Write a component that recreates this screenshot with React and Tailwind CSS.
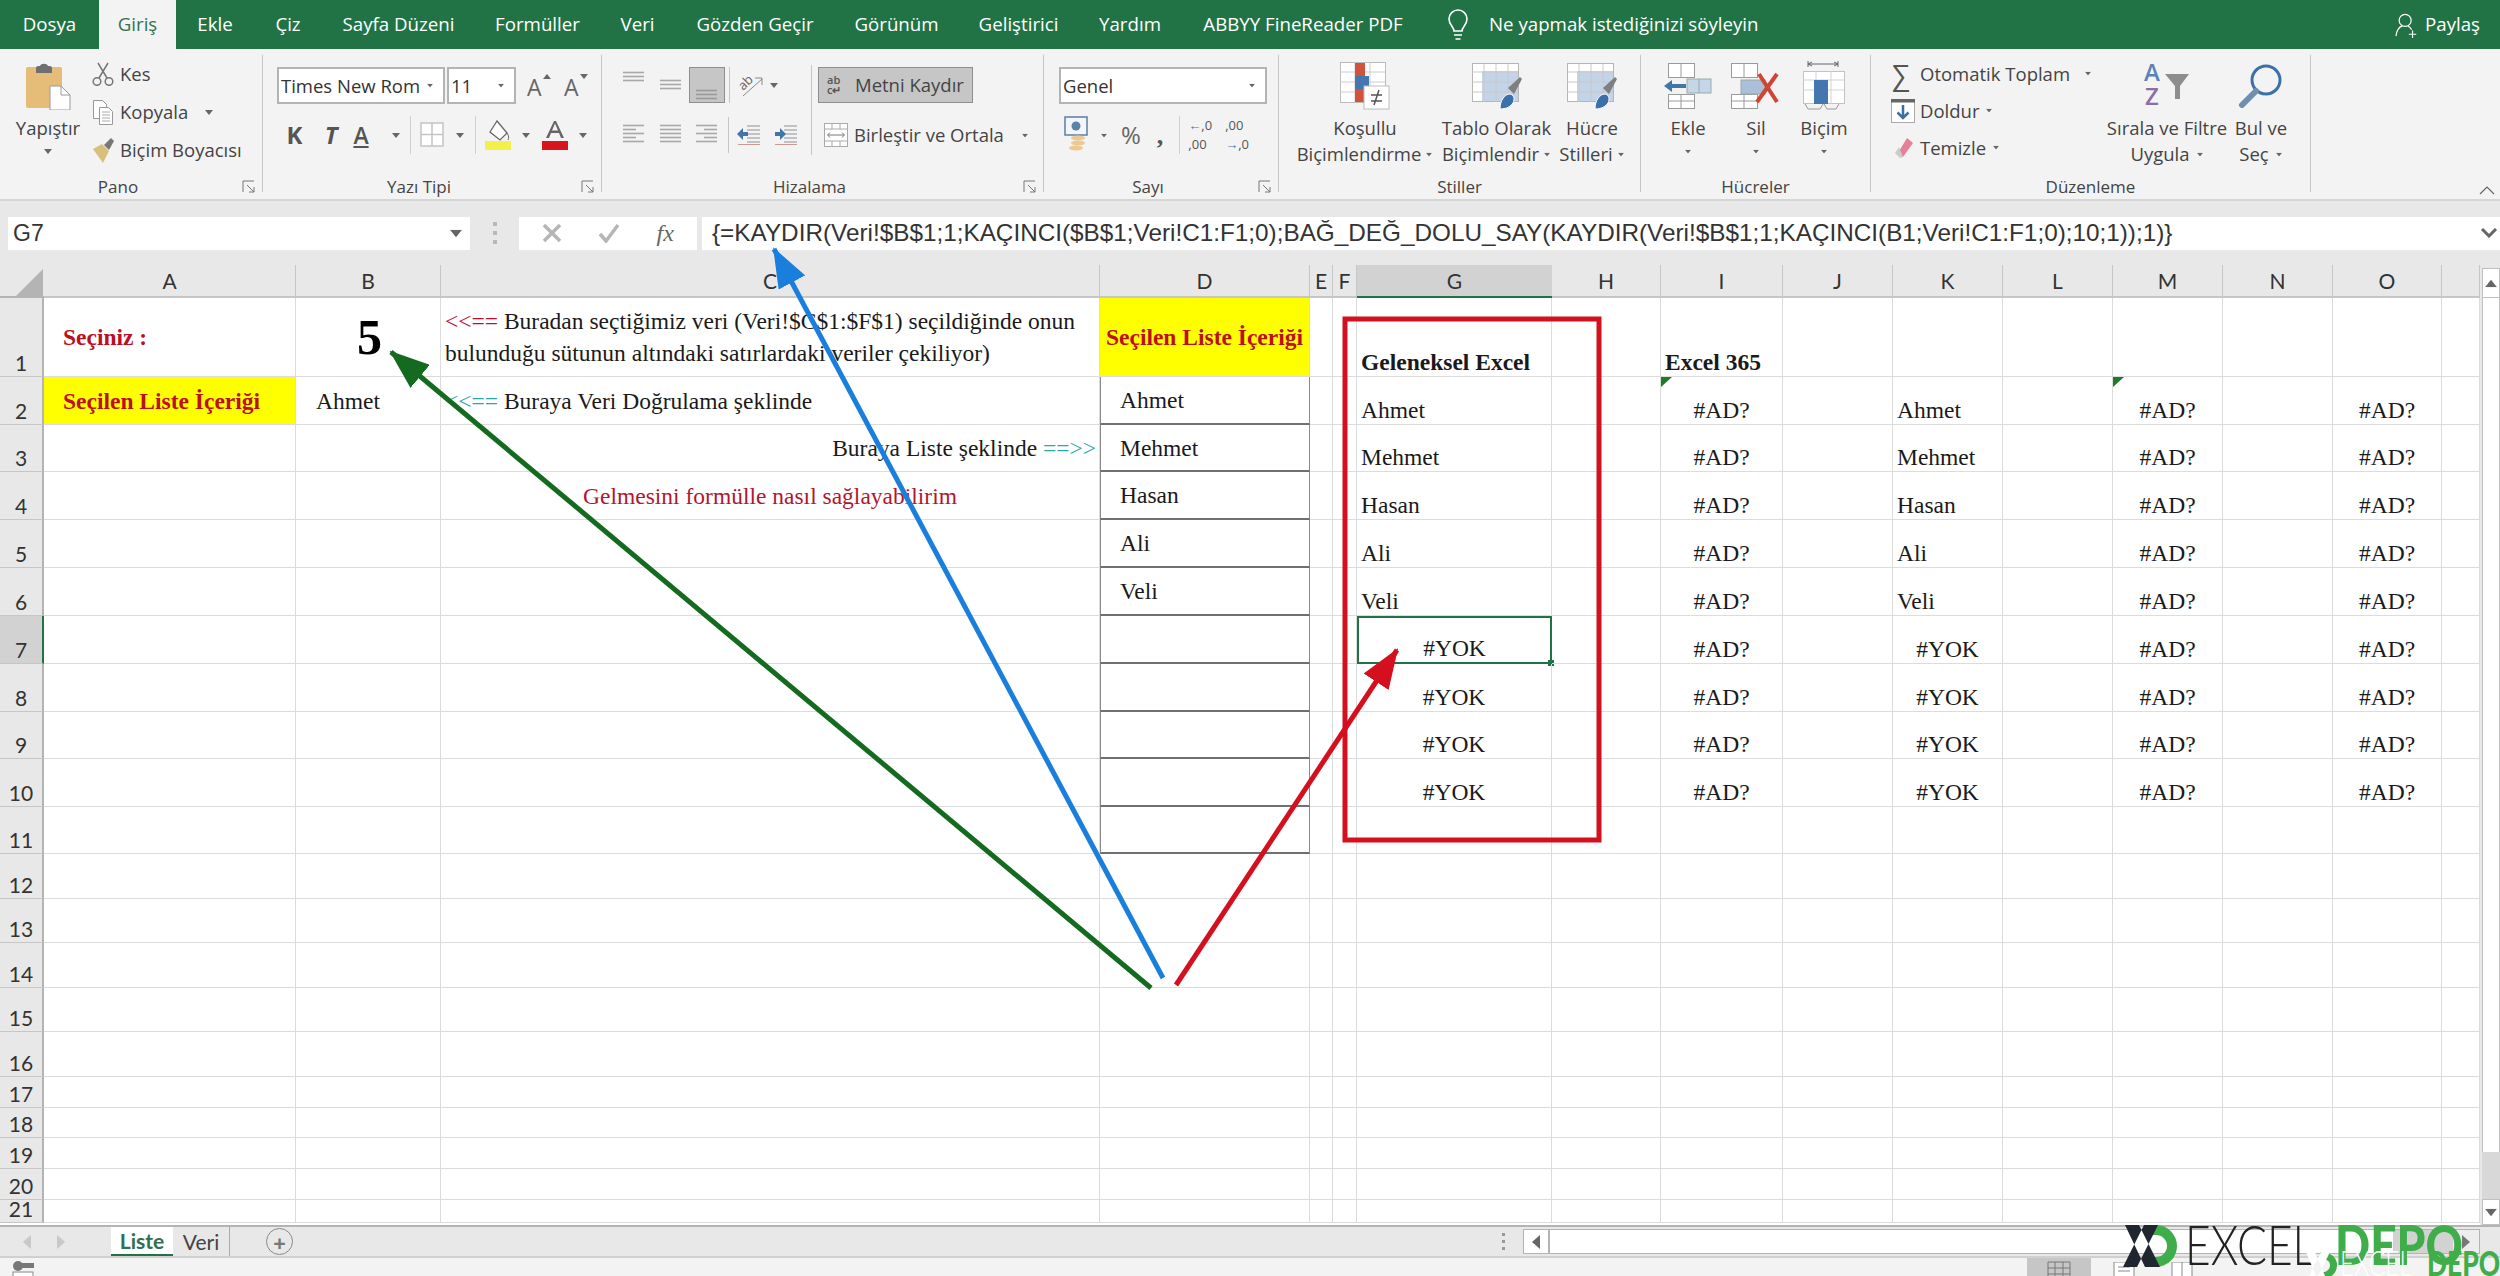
import React from 'react';

const UI = "font-['Open_Sans',sans-serif]";

const tabs = [
  ['Dosya', 'w-[99px]'],
  ['Giriş', 'w-[77px] bg-[#f3f3f3] text-[#35704f]'],
  ['Ekle', 'w-[78px]'],
  ['Çiz', 'w-[68px]'],
  ['Sayfa Düzeni', 'w-[153px]'],
  ['Formüller', 'w-[125px]'],
  ['Veri', 'w-[75px]'],
  ['Gözden Geçir', 'w-[160px]'],
  ['Görünüm', 'w-[123px]'],
  ['Geliştirici', 'w-[121px]'],
  ['Yardım', 'w-[102px]'],
  ['ABBYY FineReader PDF', 'w-[244px]'],
];

const Caret = ({ className = '' }) => (
  <svg width="8" height="5" viewBox="0 0 8 5" className={`shrink-0 ${className}`}>
    <path d="M0 0h8L4 5z" fill="#666" />
  </svg>
);

const Launcher = () => (
  <svg width="14" height="14" viewBox="0 0 14 14" fill="none" stroke="#777" strokeWidth="1">
    <path d="M1 12V1h11" />
    <path d="M5 5l7 7M12 7v5H7" />
  </svg>
);

const Group = ({ width, title, launcher, children }) => (
  <div className={`${width} mt-[6px] flex h-[137px] shrink-0 flex-col border-r border-[#c6c6c6]`}>
    <div className="h-[118px]">{children}</div>
    <div className="flex h-[19px] items-center pt-[8px] text-[17px] text-[#444]">
      <div className="flex-1 text-center leading-none">{title}</div>
      {launcher && (
        <div className="flex w-[26px] justify-center">
          <Launcher />
        </div>
      )}
    </div>
  </div>
);

const Combo = ({ width, text }) => (
  <div className={`${width} flex h-[37px] items-center border-2 border-[#b4b4b4] bg-white pl-[2px] text-[18.500px] text-[#333]`}>
    <span className="flex-1 whitespace-nowrap">{text}</span>
    <Caret className="mr-[9px] scale-75" />
  </div>
);

const Lines = ({ w = 22, h = 36, rows, color = '#a8a8a8' }) => (
  <svg width={w} height={h} viewBox={`0 0 ${w} ${h}`} stroke={color} strokeWidth="1.6">
    {rows.map(([y, x1, x2]) => (
      <path key={y} d={`M${x1} ${y + 0.5}H${x2}`} />
    ))}
  </svg>
);

const PasteIcon = () => (
  <svg width="46" height="48" viewBox="0 0 46 48">
    <rect x="1" y="5" width="36" height="41" rx="2" fill="#e6bd78" />
    <path d="M11 6c0-2 2-2 4-2 1-3 7-3 8 0 2 0 4 0 4 2v5H11z" fill="#6f6f6f" />
    <path d="M25 24h11l9 9v15H25z" fill="#fff" stroke="#9a9a9a" />
    <path d="M36 24v9h9" fill="none" stroke="#9a9a9a" />
  </svg>
);

const ScissorsIcon = () => (
  <svg width="22" height="24" viewBox="0 0 22 24" fill="none" stroke="#777" strokeWidth="1.5">
    <path d="M6 1l9 15M16 1L7 16" />
    <circle cx="5" cy="19.5" r="3.8" />
    <circle cx="17" cy="19.5" r="3.8" />
  </svg>
);

const CopyIcon = () => (
  <svg width="22" height="26" viewBox="0 0 22 26" fill="#fff" stroke="#999">
    <path d="M1.5 1.5h9l4 4v14h-13z" />
    <path d="M7.5 8.5h9l4 4v13h-13z" />
    <path d="M10 13h8M10 16h8M10 19h8M10 22h8" stroke="#aaa" />
  </svg>
);

const BrushIcon = () => (
  <svg width="24" height="28" viewBox="0 0 24 28">
    <path d="M1 13l9-5 7 7-6 12z" fill="#d9c07a" />
    <path d="M12 9l7-7 3 3-5 9z" fill="#777" />
  </svg>
);

const GrowIcon = ({ down }) => (
  <div className="flex w-[37px] items-start">
    <span className="mt-[4px] text-[23px] leading-none text-[#666]">A</span>
    <Caret className={down ? 'ml-[1px] mt-[2px]' : 'ml-[1px] mt-[2px] rotate-180'} />
  </div>
);

const BordersIcon = () => (
  <svg width="24" height="36" viewBox="0 0 24 36" fill="#fff" stroke="#c4c4c4" strokeWidth="1.5">
    <rect x="1" y="6" width="22" height="23" />
    <path d="M12 6v23M1 17.5h22" />
  </svg>
);

const FillIcon = () => (
  <svg width="26" height="30" viewBox="0 0 26 30">
    <path d="M12 1l10 12-7 7-10-8z" fill="#fff" stroke="#666" strokeWidth="1.3" />
    <path d="M22 13c2 3 2 5 1 7" stroke="#666" fill="none" />
    <rect x="0" y="21" width="26" height="9" fill="#f3f04a" />
  </svg>
);

const FontColorIcon = () => (
  <svg width="26" height="30" viewBox="0 0 26 30">
    <path d="M4 18L12 1h2l8 17h-3l-2-5H9l-2 5zM10 10.500h6l-3-7z" fill="#666" fillRule="evenodd" />
    <rect x="0" y="21" width="26" height="9" fill="#d8141f" />
  </svg>
);

const Orientation = () => (
  <svg width="26" height="26" viewBox="0 0 26 26" fill="none" stroke="#888" strokeWidth="1" className="overflow-visible">
    <text x="1" y="15" transform="rotate(-45 8 12)" fontSize="13" fill="#666" stroke="none" fontFamily="Open Sans">ab</text>
    <path d="M5 24L24 7M17 6h7v7" />
  </svg>
);

const IndentIcon = ({ flip }) => (
  <svg width="24" height="22" viewBox="0 0 24 22">
    <path d="M10 2h13M10 6h13M10 10h13M10 14h13M10 18h13" stroke="#b2b2b2" strokeWidth="1.5" />
    {flip ? (
      <path d="M1 8h5V4l6 6-6 6v-4H1z" fill="#3f78a8" />
    ) : (
      <path d="M11 8H6V4l-6 6 6 6v-4h5z" fill="#3f78a8" />
    )}
    <path d="M1 20.500h22" stroke="#c99" strokeWidth="1" />
  </svg>
);

const MergeIcon = () => (
  <svg width="24" height="24" viewBox="0 0 24 24" fill="#fff" stroke="#aaa">
    <rect x="0.500" y="0.500" width="23" height="23" />
    <path d="M0 6h24M0 18h24M8 0v6M16 0v6M8 18v6M16 18v6" />
    <path d="M4 12h16M6 9.500L3.500 12 6 14.500M18 9.500l2.500 2.500-2.500 2.500" stroke="#777" fill="none" />
  </svg>
);

const CurrencyIcon = () => (
  <svg width="24" height="38" viewBox="0 0 24 38">
    <rect x="1" y="1" width="22" height="18" fill="#f2f5f9" stroke="#5b7fa3" strokeWidth="1.500" />
    <circle cx="12" cy="10" r="4.500" fill="#5b82a8" />
    <ellipse cx="14" cy="22" rx="7" ry="2.500" fill="#ecc98e" />
    <ellipse cx="14" cy="27" rx="7" ry="2.500" fill="#ecc98e" />
    <ellipse cx="12" cy="32" rx="7" ry="2.500" fill="#ecc98e" />
  </svg>
);

const CondIcon = () => (
  <svg width="50" height="48" viewBox="0 0 50 48">
    <rect x="0.500" y="0.500" width="45" height="40" fill="#fff" stroke="#bbb" />
    <path d="M15 0v40M30 0v40M0 10h45M0 20h45M0 30h45" stroke="#ccc" />
    <rect x="15" y="1" width="10" height="13" fill="#d1533c" />
    <rect x="15" y="14" width="14" height="13" fill="#4477b0" />
    <rect x="15" y="27" width="10" height="13" fill="#d1533c" />
    <rect x="24" y="24" width="25" height="23" fill="#fff" stroke="#bbb" />
    <path d="M31 33h11M31 39h11M39 28l-5 15" stroke="#555" strokeWidth="1.5" />
  </svg>
);

const TableIcon = () => (
  <svg width="50" height="48" viewBox="0 0 50 48">
    <rect x="0.500" y="1.500" width="46" height="38" fill="#fff" stroke="#b5b5b5" />
    <rect x="10" y="9" width="36" height="30" fill="#c3d3e8" />
    <path d="M12 2v38M24 2v38M36 2v38M0 10h46M0 20h46M0 30h46" stroke="#c8c8c8" />
    <path d="M36 26l12-11 2 2-8 15z" fill="#7f7f7f" />
    <path d="M28 47c0-9 5-15 10-15 4 1 5 5 3 9-2 3-6 6-13 6z" fill="#3c70ab" stroke="#fff" />
  </svg>
);

const EkleIcon = () => (
  <svg width="48" height="48" viewBox="0 0 48 48">
    <g fill="#fff" stroke="#9a9a9a">
      <rect x="4.500" y="1.500" width="26" height="14" />
      <rect x="4.500" y="32.500" width="26" height="14" />
    </g>
    <path d="M17 2v14M17 33v13M5 39h25" stroke="#9a9a9a" />
    <rect x="23" y="17" width="24" height="14" fill="#c5d6e8" stroke="#9aa" />
    <path d="M35 17v14" stroke="#9aa" />
    <path d="M22 22H8v-4L0 24l8 6v-4h14z" fill="#3f78a8" />
  </svg>
);

const SilIcon = () => (
  <svg width="50" height="48" viewBox="0 0 50 48">
    <g fill="#fff" stroke="#9a9a9a">
      <rect x="0.500" y="1.500" width="26" height="14" />
      <rect x="0.500" y="32.500" width="26" height="14" />
    </g>
    <path d="M13 2v14M13 33v13M1 39h25" stroke="#9a9a9a" />
    <rect x="10" y="18" width="24" height="14" fill="#a9c0d8" stroke="#9aa" />
    <path d="M28 12l18 28M46 12L26 40" stroke="#cf4433" strokeWidth="4" />
  </svg>
);

const BicimIcon = () => (
  <svg width="44" height="50" viewBox="0 0 44 50">
    <path d="M6 4h30M6 1v6M36 1v6M10 2L6 4l4 2M32 2l4 2-4 2" stroke="#666" fill="none" />
    <rect x="1.500" y="11.500" width="41" height="32" fill="#fff" stroke="#c2c2c2" />
    <path d="M14 11v33M29 11v33M1 20h41M1 30h41" stroke="#d2d2d2" />
    <rect x="12" y="20" width="14" height="24" fill="#4477b0" />
    <path d="M3 44l3 5h12l3-5M22 44l3 5h9l3-5" fill="none" stroke="#999" />
  </svg>
);

const FillDownIcon = () => (
  <svg width="24" height="24" viewBox="0 0 24 24">
    <rect x="0.500" y="0.500" width="23" height="23" fill="#fff" stroke="#aaa" />
    <rect x="0" y="0" width="24" height="3.500" fill="#666" />
    <path d="M12 6v13M6.500 13.500L12 19l5.500-5.500" stroke="#3f6fa0" strokeWidth="2.500" fill="none" />
  </svg>
);

const EraserIcon = () => (
  <svg width="20" height="20" viewBox="0 0 20 20">
    <path d="M13 0l6 5L9 19l-5-4z" fill="#e77f98" />
    <path d="M5 9l-4 6 5 5 3-1z" fill="#ccc" />
  </svg>
);

const SortIcon = () => (
  <svg width="46" height="44" viewBox="0 0 46 44" className="overflow-visible">
    <text x="0" y="19" fontSize="24" fontWeight="600" fill="#5b83b6" fontFamily="Open Sans">A</text>
    <text x="1" y="43" fontSize="24" fontWeight="600" fill="#8a6fa6" fontFamily="Open Sans">Z</text>
    <path d="M21 12h24l-9 12v13h-5V24z" fill="#8d8d8d" />
  </svg>
);

const MagnifierIcon = () => (
  <svg width="46" height="46" viewBox="0 0 46 46" fill="none">
    <circle cx="28" cy="18" r="14" stroke="#3c70ab" strokeWidth="3" />
    <path d="M18 29L4 43" stroke="#6f8faf" strokeWidth="6" strokeLinecap="round" />
  </svg>
);

function Ribbon() {
  return (
    <div className={`flex h-[150px] bg-[#f3f3f3] text-[18.500px] text-[#444] ${UI}`}>
      <Group width="w-[263px]" title="Pano" launcher>
        <div className="flex">
          <div className="flex w-[92px] flex-col items-center pl-[4px]">
            <div className="mt-[7px] h-[48px]"><PasteIcon /></div>
            <div className="mt-[5px] leading-[26px]">Yapıştır</div>
            <Caret className="mt-[8px]" />
          </div>
          <div className="flex flex-col">
            <div className="flex h-[38px] items-center"><div className="w-[28px]"><ScissorsIcon /></div>Kes</div>
            <div className="flex h-[38px] items-center"><div className="w-[28px]"><CopyIcon /></div>Kopyala<Caret className="ml-[17px]" /></div>
            <div className="flex h-[38px] items-center whitespace-nowrap"><div className="w-[28px]"><BrushIcon /></div>Biçim Boyacısı</div>
          </div>
        </div>
      </Group>

      <Group width="w-[339px]" title="Yazı Tipi" launcher>
        <div className="pl-[14px]">
          <div className="mt-[12px] flex h-[37px] items-center">
            <Combo width="w-[168px]" text="Times New Rom" />
            <Combo width="ml-[2px] w-[69px]" text="11" />
            <div className="ml-[11px]"><GrowIcon /></div>
            <GrowIcon down />
          </div>
          <div className="mt-[12px] flex h-[38px] items-center">
            <span className="w-[35px] text-center text-[24px] font-bold text-[#555]">K</span>
            <span className="w-[38px] text-center text-[24px] font-bold italic text-[#555]">T</span>
            <span className="w-[22px] text-center text-[23px] font-semibold text-[#555] underline">A</span>
            <Caret className="ml-[20px]" />
            <div className="ml-[10px] h-[38px] border-l border-[#d0d0d0]" />
            <div className="ml-[9px]"><BordersIcon /></div>
            <Caret className="ml-[12px]" />
            <div className="ml-[11px] h-[38px] border-l border-[#d0d0d0]" />
            <div className="ml-[9px]"><FillIcon /></div>
            <Caret className="ml-[11px]" />
            <div className="ml-[12px]"><FontColorIcon /></div>
            <Caret className="ml-[11px]" />
          </div>
        </div>
      </Group>

      <Group width="w-[442px]" title="Hizalama" launcher>
        <div className="flex">
          <div className="ml-[21px] mt-[10px] h-[90px] w-[189px] border-r border-[#c6c6c6]">
            <div className="mt-[2px] flex h-[36px] items-center">
              <Lines rows={[[5, 0, 21], [9, 0, 21], [13, 0, 21]]} />
              <div className="ml-[15px]"><Lines rows={[[13, 0, 21], [17, 0, 21], [21, 0, 21]]} /></div>
              <div className="ml-[7px] flex h-[36px] w-[36px] justify-center border border-[#8e8e8e] bg-[#c6c6c6]">
                <Lines rows={[[22, 0, 21], [26, 0, 21], [30, 0, 21]]} color="#999" />
              </div>
              <div className="ml-[4px] h-[36px] border-l border-[#c6c6c6]" />
              <div className="ml-[8px]"><Orientation /></div>
              <Caret className="ml-[6px]" />
            </div>
            <div className="mt-[14px] flex h-[36px] items-center">
              <Lines rows={[[8, 0, 21], [12, 0, 13], [16, 0, 21], [20, 0, 13], [24, 0, 21]]} />
              <div className="ml-[15px]"><Lines rows={[[8, 0, 21], [12, 0, 21], [16, 0, 21], [20, 0, 21], [24, 0, 21]]} /></div>
              <div className="ml-[14px]"><Lines rows={[[8, 0, 21], [12, 8, 21], [16, 0, 21], [20, 8, 21], [24, 0, 21]]} /></div>
              <div className="ml-[10px] h-[36px] border-l border-[#c6c6c6]" />
              <div className="ml-[8px]"><IndentIcon /></div>
              <div className="ml-[13px]"><IndentIcon flip /></div>
            </div>
          </div>
          <div className="ml-[6px] mt-[12px]">
            <div className="flex h-[36px] w-[155px] items-center border border-[#8e8e8e] bg-[#c6c6c6] pl-[8px]">
              <div className="w-[28px] text-[11px] font-semibold leading-[10px] text-[#555]">ab<br />c↵</div>
              <span className="whitespace-nowrap">Metni Kaydır</span>
            </div>
            <div className="mt-[14px] flex h-[36px] items-center pl-[6px]">
              <div className="w-[30px]"><MergeIcon /></div>
              <span className="whitespace-nowrap">Birleştir ve Ortala</span>
              <Caret className="ml-[17px] scale-75" />
            </div>
          </div>
        </div>
      </Group>

      <Group width="w-[235px]" title="Sayı" launcher>
        <div className="pl-[15px]">
          <div className="mt-[12px]"><Combo width="w-[208px]" text="Genel" /></div>
          <div className="mt-[12px] flex h-[38px] items-center">
            <div className="ml-[5px]"><CurrencyIcon /></div>
            <Caret className="ml-[12px] scale-75" />
            <span className="ml-[13px] text-[24px] text-[#666]">%</span>
            <span className="ml-[16px] font-['Liberation_Serif',serif] text-[26px] font-bold text-[#555]">,</span>
            <div className="ml-[16px] h-[38px] border-l border-[#d0d0d0]" />
            <div className="ml-[8px] text-[13px] leading-[19px] text-[#555]"><span className="text-[#3f78a8]">←</span>,0<br />,00</div>
            <div className="ml-[13px] text-[13px] leading-[19px] text-[#555]">,00<br /><span className="text-[#3f78a8]">→</span>,0</div>
          </div>
        </div>
      </Group>

      <Group width="w-[362px]" title="Stiller">
        <div className="flex pl-[11px]">
          <div className="flex w-[150px] flex-col items-center">
            <div className="mt-[7px] h-[48px]"><CondIcon /></div>
            <div className="mt-[5px] leading-[26px]">Koşullu</div>
            <div className="flex items-center leading-[26px]">Biçimlendirme<Caret className="ml-[4px] scale-75" /></div>
          </div>
          <div className="flex w-[113px] flex-col items-center">
            <div className="mt-[7px] h-[48px]"><TableIcon /></div>
            <div className="mt-[5px] whitespace-nowrap leading-[26px]">Tablo Olarak</div>
            <div className="flex items-center leading-[26px]">Biçimlendir<Caret className="ml-[4px] scale-75" /></div>
          </div>
          <div className="flex w-[78px] flex-col items-center">
            <div className="mt-[7px] h-[48px]"><TableIcon /></div>
            <div className="mt-[5px] leading-[26px]">Hücre</div>
            <div className="flex items-center leading-[26px]">Stilleri<Caret className="ml-[4px] scale-75" /></div>
          </div>
        </div>
      </Group>

      <Group width="w-[230px]" title="Hücreler">
        <div className="flex pl-[14px]">
          <div className="flex w-[66px] flex-col items-center">
            <div className="mt-[7px] h-[48px]"><EkleIcon /></div>
            <div className="mt-[5px] leading-[26px]">Ekle</div>
            <Caret className="mt-[8px] scale-75" />
          </div>
          <div className="flex w-[70px] flex-col items-center">
            <div className="mt-[7px] h-[48px]"><SilIcon /></div>
            <div className="mt-[5px] leading-[26px]">Sil</div>
            <Caret className="mt-[8px] scale-75" />
          </div>
          <div className="flex w-[66px] flex-col items-center">
            <div className="mt-[5px] h-[50px]"><BicimIcon /></div>
            <div className="mt-[5px] leading-[26px]">Biçim</div>
            <Caret className="mt-[8px] scale-75" />
          </div>
        </div>
      </Group>

      <Group width="w-[440px]" title="Düzenleme">
        <div className="flex pl-[20px]">
          <div className="w-[214px]">
            <div className="flex h-[37px] items-center whitespace-nowrap">
              <span className="w-[29px] pl-[1px] text-[28px] leading-none text-[#555]">∑</span>Otomatik Toplam<Caret className="ml-[14px] scale-75" />
            </div>
            <div className="flex h-[37px] items-center"><div className="w-[29px]"><FillDownIcon /></div>Doldur<Caret className="ml-[6px] scale-75" /></div>
            <div className="flex h-[37px] items-center"><div className="w-[29px] pl-[3px]"><EraserIcon /></div>Temizle<Caret className="ml-[6px] scale-75" /></div>
          </div>
          <div className="flex w-[124px] flex-col items-center">
            <div className="mt-[7px] h-[48px]"><SortIcon /></div>
            <div className="mt-[5px] whitespace-nowrap leading-[26px]">Sırala ve Filtre</div>
            <div className="flex items-center leading-[26px]">Uygula<Caret className="ml-[6px] scale-75" /></div>
          </div>
          <div className="flex w-[64px] flex-col items-center">
            <div className="mt-[7px] h-[48px]"><MagnifierIcon /></div>
            <div className="mt-[5px] whitespace-nowrap leading-[26px]">Bul ve</div>
            <div className="flex items-center leading-[26px]">Seç<Caret className="ml-[6px] scale-75" /></div>
          </div>
        </div>
      </Group>

      <div className="flex flex-1 items-end justify-end pb-[4px] pr-[5px]">
        <svg width="16" height="9" viewBox="0 0 16 9" fill="none" stroke="#666" strokeWidth="1.2"><path d="M1 8l7-7 7 7" /></svg>
      </div>
    </div>
  );
}

function FormulaBar() {
  return (
    <div className="flex h-[66px] items-center border-t-2 border-[#d6d6d6] bg-[#e8e8e8] pl-[8px] font-['Liberation_Sans',sans-serif] text-[#333]">
      <div className="flex h-[33px] w-[462px] items-center bg-white pl-[5px] text-[23px]">
        <span className="flex-1">G7</span>
        <Caret className="mr-[10px] scale-150" />
      </div>
      <div className="flex w-[49px] flex-col items-center gap-[5px]">
        <i className="h-[4px] w-[4px] bg-[#b8b8b8]" />
        <i className="h-[4px] w-[4px] bg-[#b8b8b8]" />
        <i className="h-[4px] w-[4px] bg-[#b8b8b8]" />
      </div>
      <div className="flex h-[33px] w-[178px] items-center justify-around bg-white px-[5px]">
        <svg width="20" height="20" viewBox="0 0 20 20" stroke="#b5b5b5" strokeWidth="3.500"><path d="M2 2l16 16M18 2L2 18" /></svg>
        <svg width="22" height="20" viewBox="0 0 22 20" fill="none" stroke="#b5b5b5" strokeWidth="3.500"><path d="M2 11l6 7L20 2" /></svg>
        <span className="font-['Liberation_Serif',serif] text-[24px] italic text-[#666]">fx</span>
      </div>
      <div className="ml-[5px] flex h-[33px] flex-1 items-center whitespace-nowrap bg-white pl-[10px] text-[24.300px]">
        <span className="flex-1">{'{=KAYDIR(Veri!$B$1;1;KAÇINCI($B$1;Veri!C1:F1;0);BAĞ_DEĞ_DOLU_SAY(KAYDIR(Veri!$B$1;1;KAÇINCI(B1;Veri!C1:F1;0);10;1));1)}'}</span>
        <svg width="18" height="10" viewBox="0 0 18 10" fill="none" stroke="#666" strokeWidth="3" className="mr-[2px]"><path d="M2 1l7 7 7-7" /></svg>
      </div>
    </div>
  );
}

const columns = ['A', 'B', 'C', 'D', 'E', 'F', 'G', 'H', 'I', 'J', 'K', 'L', 'M', 'N', 'O', ''];
const rowCount = 21;

const RED = 'font-bold text-[#bc0f1f]';
const BTM = 'items-end leading-[28px]';
const MID = 'items-center pt-[2px]';

const ListBox = 'border-x border-b-2 border-x-[#8a8a8a] border-b-[#707070]';

const cells = {
  A1: { text: 'Seçiniz :', cls: `${MID} pl-[19px] ${RED}` },
  B1: { text: '5', cls: `items-center justify-center pl-[3px] text-[50px] font-bold text-black` },
  D1: { text: 'Seçilen Liste İçeriği', cls: `${MID} justify-center whitespace-nowrap bg-[#ffff00] ${RED}` },
  G1: { text: 'Geleneksel Excel', cls: `${BTM} whitespace-nowrap pl-[4px] font-bold` },
  I1: { text: 'Excel 365', cls: `${BTM} whitespace-nowrap pl-[4px] font-bold` },
  A2: { text: 'Seçilen Liste İçeriği', cls: `${MID} whitespace-nowrap bg-[#ffff00] pl-[19px] ${RED}` },
  B2: { text: 'Ahmet', cls: `${MID} pl-[20px]` },
  C3: {
    text: <span>Buraya Liste şeklinde <span className="text-[#2aa7a7]">==&gt;&gt;</span></span>,
    cls: `${MID} justify-end pr-[3px]`,
  },
  C2: {
    text: <span><span className="text-[#2aa7a7]">&lt;&lt;==</span> Buraya Veri Doğrulama şeklinde</span>,
    cls: `${MID} pl-[4px]`,
  },
  C4: { text: 'Gelmesini formülle nasıl sağlayabilirim', cls: `${MID} justify-center text-[#b3152d]` },
};

['Ahmet', 'Mehmet', 'Hasan', 'Ali', 'Veli', '', '', '', '', ''].forEach((name, i) => {
  const n = i + 2;
  cells[`D${n}`] = { text: name, cls: `${MID} pl-[19px] ${ListBox}` };
  if (name) {
    cells[`G${n}`] = { text: name, cls: `${BTM} pl-[4px]` };
    cells[`K${n}`] = { text: name, cls: `${BTM} pl-[4px]` };
  } else if (n <= 10) {
    cells[`G${n}`] = { text: '#YOK', cls: `${BTM} justify-center` };
    cells[`K${n}`] = { text: '#YOK', cls: `${BTM} justify-center` };
  }
  if (n <= 10) {
    ['I', 'M', 'O'].forEach((c) => {
      cells[`${c}${n}`] = { text: '#AD?', cls: `${BTM} justify-center` };
    });
  }
});

const Triangle = () => (
  <svg width="12" height="10" viewBox="0 0 12 10" className="absolute left-0 top-0">
    <path d="M0 0h11L0 10z" fill="#1f7a2c" />
  </svg>
);

function Sheet() {
  const rows = Array.from({ length: rowCount }, (_, i) => i + 1);
  return (
    <div className="flex">
      <div className="grid w-[2480px] grid-cols-[44px_252px_145px_659px_210px_23px_24px_195px_109px_122px_110px_110px_110px_110px_110px_109px_38px] grid-rows-[33px_79px_48px_47px_48px_48px_48px_48px_48px_47px_48px_47px_45px_44px_45px_44px_45px_31px_30px_31px_31px_23px] overflow-hidden bg-white font-['Liberation_Serif',serif] text-[23.500px] text-[#1a1a1a]">
        <div className="flex items-end justify-end border-b-2 border-[#b4b4b4] bg-[#e8e8e8] pr-[1px]">
          <svg width="27" height="27" viewBox="0 0 27 27"><path d="M27 0v27H0z" fill="#b4b4b4" /></svg>
        </div>
        {columns.map((c) => (
          <div
            key={c || 'end'}
            className={`flex items-center justify-center border-b-2 font-['Lato',sans-serif] text-[21px] text-[#333] ${
              c === 'G' ? 'border-[#217346] bg-[#d2d2d2]' : 'border-r border-[#c6c6c6] bg-[#e8e8e8]'
            }`}
          >
            {c}
          </div>
        ))}
        {rows.map((r) => (
          <React.Fragment key={r}>
            <div
              className={`flex items-end justify-center overflow-hidden border-b font-['Lato',sans-serif] text-[21px] leading-[27px] text-[#333] ${
                r === 7 ? 'border-r-2 border-r-[#217346] border-b-[#c6c6c6] bg-[#d2d2d2]' : 'border-r-2 border-r-[#b4b4b4] border-b-[#c6c6c6] bg-[#e8e8e8]'
              }`}
            >
              {r}
            </div>
            {columns.map((c) => {
              const id = `${c}${r}`;
              const cell = cells[id];
              if (id === 'C1') {
                return (
                  <div key={id} className="flex items-center border-b border-r border-[#dcdcdc] pl-[4px] leading-[32px]">
                    <div className="w-[652px]">
                      <span className="text-[#c00d30]">&lt;&lt;==</span> Buradan seçtiğimiz veri (Veri!$C$1:$F$1) seçildiğinde onun bulunduğu sütunun altındaki satırlardaki veriler çekiliyor)
                    </div>
                  </div>
                );
              }
              const selected = id === 'G7';
              return (
                <div
                  key={id || r}
                  className={`relative flex ${cell ? cell.cls : ''} ${
                    selected ? 'border-2 border-[#217346]' : 'border-b border-r border-[#dcdcdc]'
                  }`}
                >
                  {cell && cell.text}
                  {(id === 'I2' || id === 'M2') && <Triangle />}
                  {selected && <i className="absolute -bottom-[4px] -right-[4px] h-[6px] w-[6px] bg-[#217346]" />}
                </div>
              );
            })}
          </React.Fragment>
        ))}
      </div>
      <div className="flex w-[20px] flex-col bg-[#e8e8e8]">
        <div className="h-[2px]" />
        <div className="ml-[2px] mt-[1px] flex h-[30px] items-center justify-center border border-[#c0c0c0] bg-white">
          <Caret className="rotate-180 scale-150" />
        </div>
        <div className="ml-[2px] h-[854px] border-x border-[#c0c0c0] bg-white" />
        <div className="ml-[2px] h-[47px] bg-[#d8d8d8]" />
        <div className="ml-[2px] flex h-[26px] items-center justify-center border border-[#c0c0c0] bg-white">
          <Caret className="scale-150" />
        </div>
      </div>
    </div>
  );
}

function SheetTabs() {
  return (
    <div className={`flex h-[33px] items-stretch border-y-2 border-t-[#b4b4b4] border-b-[#d0d0d0] bg-[#e8e8e8] ${UI}`}>
      <div className="flex w-[111px] items-center pl-[23px]">
        <svg width="9" height="14" viewBox="0 0 9 14"><path d="M8 0v14L0 7z" fill="#c8c8c8" /></svg>
        <svg width="9" height="14" viewBox="0 0 9 14" className="ml-[24px]"><path d="M1 0v14l8-7z" fill="#c8c8c8" /></svg>
      </div>
      <div className="flex w-[62px] items-center justify-center border-b-2 border-[#217346] bg-white font-['Lato',sans-serif] text-[21px] font-bold text-[#2f7050]">Liste</div>
      <div className="flex w-[57px] items-center justify-center border-r border-[#aaa] font-['Lato',sans-serif] text-[21px] text-[#444]">Veri</div>
      <div className="ml-[36px] flex items-center">
        <div className="flex h-[27px] w-[27px] items-center justify-center rounded-full border border-[#888] text-[22px] font-bold leading-none text-[#777]">+</div>
      </div>
      <div className="ml-[1190px] flex w-[40px] items-center justify-center">
        <span className="flex flex-col gap-[4px]">
          <i className="h-[3px] w-[3px] bg-[#999]" />
          <i className="h-[3px] w-[3px] bg-[#999]" />
          <i className="h-[3px] w-[3px] bg-[#999]" />
        </span>
      </div>
      <div className="my-[2px] flex w-[957px] border border-[#b4b4b4]">
        <div className="flex w-[26px] items-center justify-center border-r-2 border-[#b4b4b4] bg-white">
          <svg width="8" height="14" viewBox="0 0 8 14"><path d="M8 0v14L0 7z" fill="#666" /></svg>
        </div>
        <div className="flex-1 bg-white" />
        <div className="w-[60px] bg-[#d2d2d2]" />
        <div className="flex w-[26px] items-center justify-center bg-[#ededed]">
          <svg width="8" height="14" viewBox="0 0 8 14"><path d="M0 0v14l8-7z" fill="#777" /></svg>
        </div>
      </div>
    </div>
  );
}

function StatusBar() {
  return (
    <div className={`flex h-[20px] bg-[#f3f3f3] ${UI} text-[15px] text-[#555]`}>
      <svg width="24" height="20" viewBox="0 0 24 20" className="ml-[12px] mt-[2px]">
        <circle cx="6" cy="6" r="5" fill="#777" />
        <rect x="10" y="3" width="12" height="5" fill="#777" />
        <rect x="1" y="12" width="20" height="8" fill="#fff" stroke="#888" />
      </svg>
      <div className="ml-[1991px] flex h-[20px] w-[64px] justify-center bg-[#c6c6c6] pt-[2px]">
        <svg width="24" height="18" viewBox="0 0 24 18" fill="none" stroke="#777"><path d="M1 2h22v16M1 2v16M1 8h22M1 14h22M8 2v16M16 2v16" /></svg>
      </div>
      <svg width="22" height="16" viewBox="0 0 22 16" className="ml-[22px] mt-[4px]" fill="#fff" stroke="#888"><path d="M1 0h20v16H1z" /><path d="M5 5h12M5 9h12" /></svg>
      <svg width="22" height="16" viewBox="0 0 22 16" className="ml-[36px] mt-[4px]" fill="#fff" stroke="#888"><path d="M1 0h20v16H1zM11 0v16" /></svg>
      <div className="ml-[30px] mt-[18px] h-[2px] w-[190px] bg-[#999]" />
    </div>
  );
}

function Overlay() {
  return (
    <svg viewBox="0 0 2500 1276" className="pointer-events-none absolute left-0 top-0 h-[1276px] w-[2500px]">
      <defs>
        <marker id="g" markerWidth="8" markerHeight="6" refX="7.600" refY="3" orient="auto"><path d="M0 0L8 3 0 6z" fill="#146b1f" /></marker>
        <marker id="b" markerWidth="8" markerHeight="6" refX="7.600" refY="3" orient="auto"><path d="M0 0L8 3 0 6z" fill="#1a7fdc" /></marker>
        <marker id="r" markerWidth="8" markerHeight="6" refX="7.600" refY="3" orient="auto"><path d="M0 0L8 3 0 6z" fill="#d4101f" /></marker>
      </defs>
      <rect x="1345" y="319" width="254" height="521" fill="none" stroke="#d4101f" strokeWidth="5" />
      <line x1="1151" y1="988" x2="391" y2="352" stroke="#146b1f" strokeWidth="5" markerEnd="url(#g)" />
      <line x1="1163" y1="978" x2="774" y2="249" stroke="#1a7fdc" strokeWidth="5" markerEnd="url(#b)" />
      <line x1="1176" y1="985" x2="1397" y2="650" stroke="#d4101f" strokeWidth="5" markerEnd="url(#r)" />

      <path d="M2148 1230h8a16 16 0 0 1 0 32h-8" fill="none" stroke="#3fae4a" strokeWidth="10" />
      <path d="M2125 1225h14l21 42h-15zM2158 1225h-14l-21 42h14z" fill="#1f2630" />
      <text x="2185" y="1265" fontFamily="Lato" fontWeight="300" fontSize="56" textLength="130" lengthAdjust="spacingAndGlyphs" fill="#222">EXCEL</text>
      <text x="2335" y="1265" fontFamily="Lato" fontWeight="900" fontSize="56" textLength="128" lengthAdjust="spacingAndGlyphs" fill="#3fae4a">DEPO</text>
      <path d="M2320 1256h3c14 0 14 18 0 20h-3" fill="none" stroke="#3fae4a" strokeWidth="7" />
      <path d="M2306 1252h9l10 24h-9zM2330 1252h-9l-12 24h9z" fill="#fff" />
      <text x="2340" y="1276" fontFamily="Lato" fontWeight="300" fontSize="36" textLength="72" lengthAdjust="spacingAndGlyphs" fill="#fff">EXCEL</text>
      <text x="2427" y="1276" fontFamily="Lato" fontWeight="900" fontSize="34" textLength="73" lengthAdjust="spacingAndGlyphs" fill="#3fae4a">DEPO</text>
    </svg>
  );
}

export default function App() {
  return (
    <div className="relative h-[1276px] w-[2500px] overflow-hidden bg-white">
      <div className={`flex h-[49px] items-stretch bg-[#217346] text-[18.700px] text-white ${UI}`}>
        {tabs.map(([name, cls]) => (
          <div key={name} className={`${cls} flex items-center justify-center whitespace-nowrap`}>{name}</div>
        ))}
        <div className="ml-[22px] flex items-center">
          <svg width="22" height="32" viewBox="0 0 22 32" fill="none" stroke="#fff" strokeWidth="1.600">
            <path d="M7 22c0-4-5-6-5-12a9 9 0 0 1 18 0c0 6-5 8-5 12z" />
            <path d="M7 26h8M8.500 30h5" />
          </svg>
        </div>
        <div className="ml-[20px] flex items-center">Ne yapmak istediğinizi söyleyin</div>
        <div className="ml-auto flex items-center pr-[20px]">
          <svg width="24" height="28" viewBox="0 0 26 28" fill="none" stroke="#fff" strokeWidth="1.300" className="mr-[6px]">
            <circle cx="11" cy="9" r="6.500" />
            <path d="M1 26c1-7 4-10 7-11M14 15c2 1 3 2 4 4M19 20v8M15 24h8" />
          </svg>
          Paylaş
        </div>
      </div>
      <Ribbon />
      <FormulaBar />
      <Sheet />
      <SheetTabs />
      <StatusBar />
      <Overlay />
    </div>
  );
}
